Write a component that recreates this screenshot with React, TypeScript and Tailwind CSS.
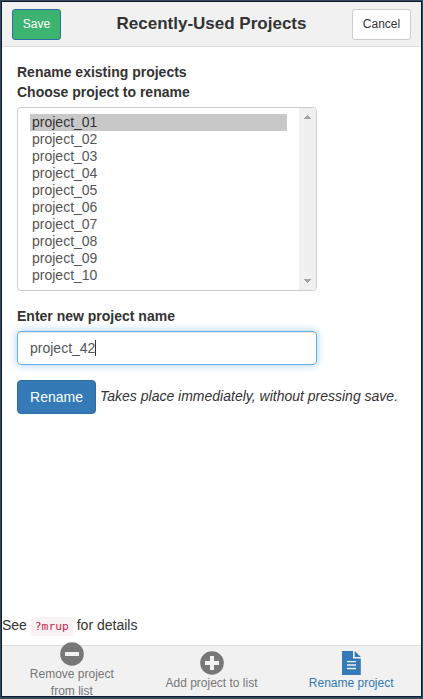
import React from "react";

const projects = Array.from({ length: 10 }, (_, i) => `project_${String(i + 1).padStart(2, "0")}`);

function MinusIcon() {
  return (
    <svg width="24" height="24" viewBox="0 0 24 24" className="block">
      <circle cx="12" cy="12" r="11.8" fill="#777" />
      <rect x="5" y="10" width="14" height="4" fill="#f1f1f1" />
    </svg>
  );
}

function PlusIcon() {
  return (
    <svg width="24" height="24" viewBox="0 0 24 24" className="block">
      <circle cx="12" cy="12" r="11.8" fill="#777" />
      <path d="M10 5h4v5h5v4h-5v5h-4v-5H5v-4h5z" fill="#f1f1f1" />
    </svg>
  );
}

function FileIcon() {
  return (
    <svg width="19" height="24" viewBox="0 0 19 24" className="block" fill="#337ab7">
      <path fillRule="evenodd" d="M0 0h11v7.5h7.8V24H0zM5 10v1.2h9V10zM5 13.3v1.4h9v-1.4zM5 16.8v1.4h9v-1.4z" />
      <path d="M12.7 0L18.8 6h-6.1z" />
    </svg>
  );
}

export default function App() {
  return (
    <div className="h-[699px] w-[423px] border border-b-2 border-[#34495e] bg-[#34495e]">
      <div className="flex h-[696px] flex-col border border-[#0d1c30] bg-white font-['Liberation_Sans',Arial,sans-serif] text-[14px] leading-5 text-[#333]">
        <header className="grid h-[45px] shrink-0 grid-cols-[59px_1fr_59px] items-center border-b border-[#ddd] bg-[#f1f1f1] px-[10px]">
          <button className="h-[31px] w-[49px] rounded-[3px] border border-[#2e6da4] bg-[#3cb371] text-[12px] leading-[18px] text-white">Save</button>
          <h1 className="text-center text-[17px] font-bold leading-6">Recently-Used Projects</h1>
          <button className="h-[31px] w-[59px] rounded-[3px] border border-[#ccc] bg-white text-[12px] leading-[18px]">Cancel</button>
        </header>
        <main className="flex min-h-0 flex-1 flex-col">
          <div className="flex flex-col px-[15px] pt-[15px]">
            <p className="font-bold">Rename existing projects</p>
            <p className="font-bold">Choose project to rename</p>
            <div className="mt-[5px] flex h-[184px] w-[300px] overflow-hidden rounded-[4px] border border-[#ccc]">
              <ul className="flex-1 px-3 pt-[6px] text-[#555]">
                {projects.map((p, i) => (
                  <li key={p} className={i === 0 ? "h-[17px] bg-[#c8c8c8] pl-[2px] leading-[17px] text-[#333]" : "h-[17px] pl-[2px] leading-[17px]"}>{p}</li>
                ))}
              </ul>
              <div className="flex w-[17px] flex-col items-center justify-between bg-[#f0f0f0] py-[7px]">
                <svg width="7" height="4" viewBox="0 0 7 4" shapeRendering="crispEdges"><path d="M3 0h1v1h1v1h1v1h1v1H0V3h1V2h1V1h1z" fill="#a3a3a3" /></svg>
                <svg width="7" height="4" viewBox="0 0 7 4" shapeRendering="crispEdges"><path d="M0 0h7v1H6v1H5v1H4v1H3V3H2V2H1V1H0z" fill="#a3a3a3" /></svg>
              </div>
            </div>
            <label className="mt-[15px] font-bold">Enter new project name</label>
            <div className="mt-[5px] flex h-[34px] w-[300px] items-center rounded-[4px] border border-[#66afe9] pl-3 text-[#555] shadow-[inset_0_1px_1px_rgba(0,0,0,0.075),0_0_8px_rgba(102,175,233,0.6)]">
              <span>project_42</span>
              <span className="h-4 w-px bg-[#333]" />
            </div>
            <div className="mt-[15px] flex items-center gap-1">
              <button className="h-[34px] w-[79px] rounded-[4px] border border-[#2e6da4] bg-[#337ab7] text-white">Rename</button>
              <em className="pb-[2px]">Takes place immediately, without pressing save.</em>
            </div>
          </div>
          <p className="mb-2 mt-auto">
            See <code className="rounded-[4px] bg-[#f9f2f4] px-1 py-[3px] font-['DejaVu_Sans_Mono',monospace] text-[11.3px] text-[#c7254e]">?mrup</code> for details
          </p>
        </main>
        <footer className="flex h-[51px] shrink-0 items-start border-t border-[#ddd] bg-[#f1f1f1] text-center text-[12px] leading-[17px] text-[#777]">
          <div className="-mt-1 flex flex-1 flex-col items-center">
            <MinusIcon />
            <span className="w-[90px]">Remove project from list</span>
          </div>
          <div className="flex flex-1 flex-col items-center pt-[5px]">
            <PlusIcon />
            <span>Add project to list</span>
          </div>
          <div className="flex flex-1 flex-col items-center pt-[5px] text-[#337ab7]">
            <FileIcon />
            <span>Rename project</span>
          </div>
        </footer>
      </div>
    </div>
  );
}
